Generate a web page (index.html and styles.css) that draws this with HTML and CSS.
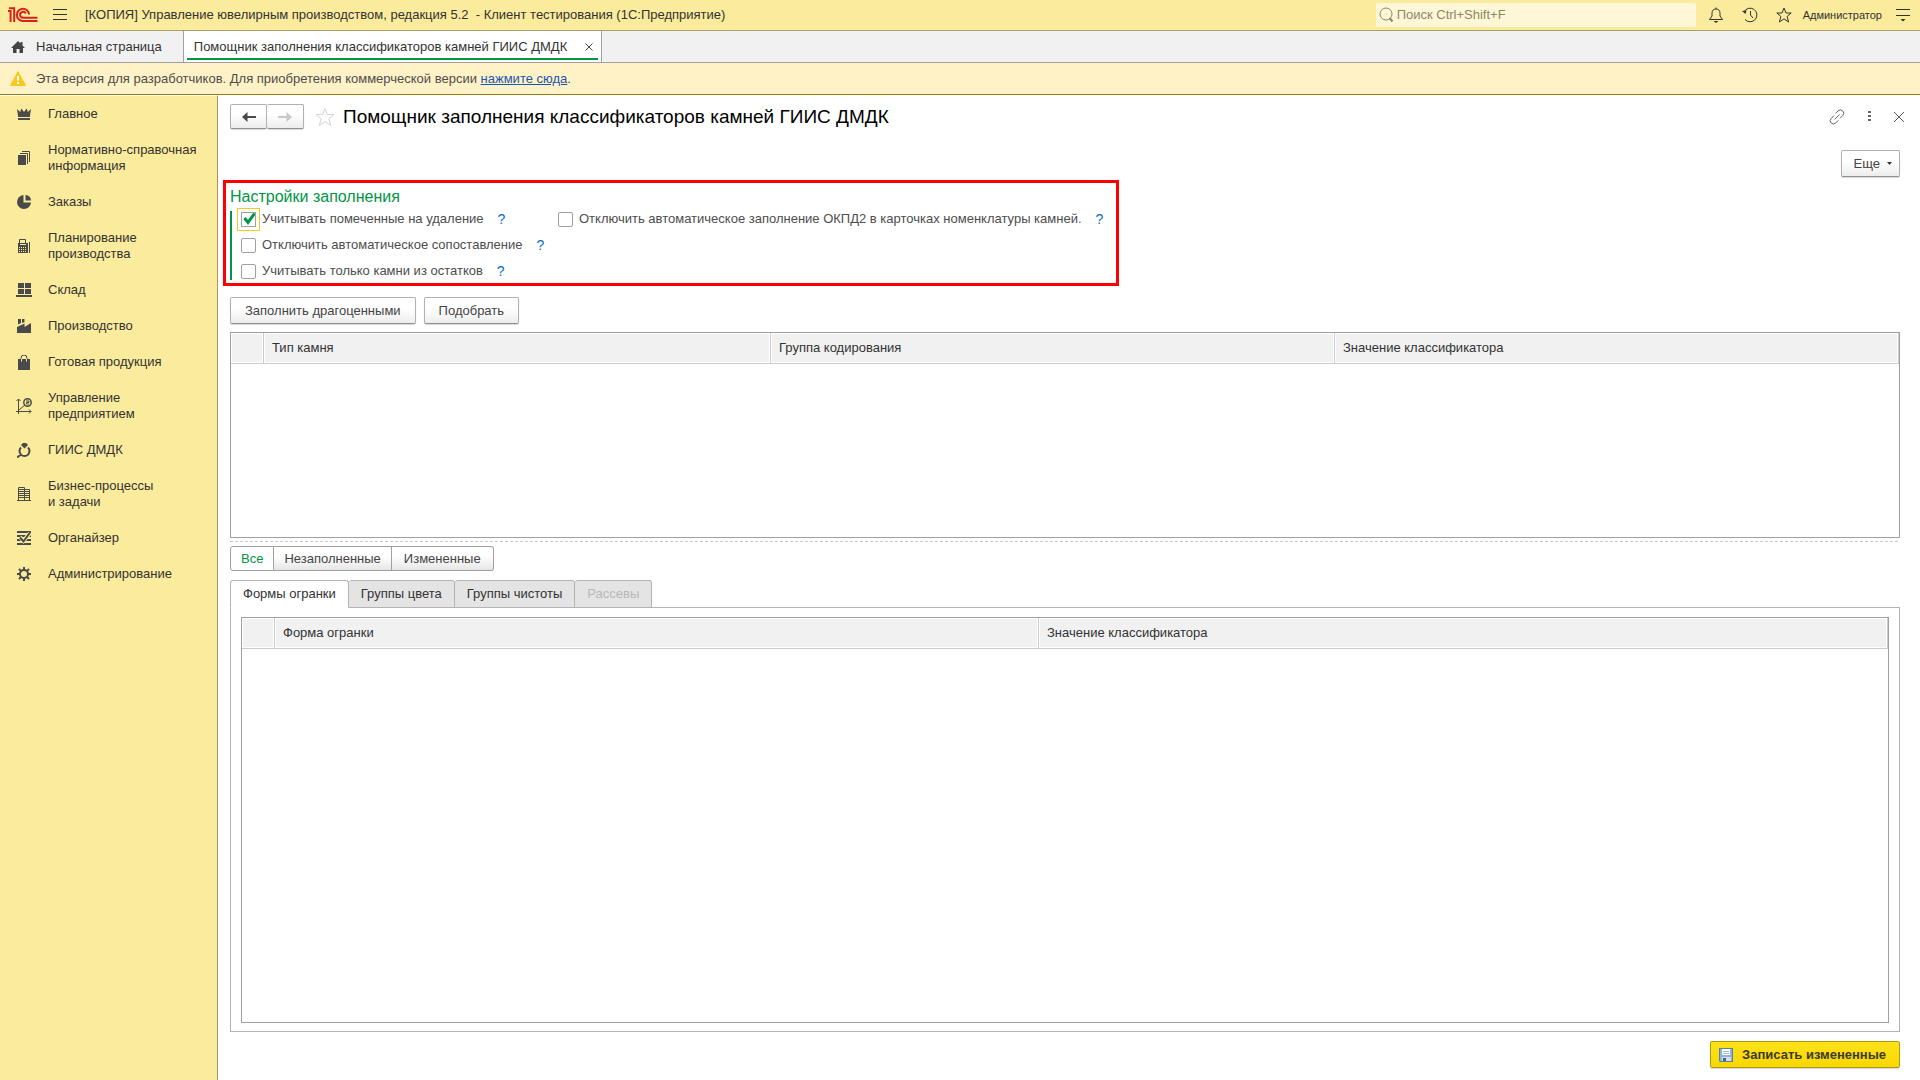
FILE: index.html
```html
<!DOCTYPE html>
<html lang="ru">
<head>
<meta charset="utf-8">
<meta name="viewport" content="width=device-width, initial-scale=1">
<title>Помощник заполнения классификаторов камней ГИИС ДМДК</title>
<link rel="stylesheet" href="styles.css">
</head>
<body>
<div class="app">
  <header class="titlebar">
    <svg class="logo" width="30" height="16" viewBox="0 0 30 16" fill="none" stroke="#d8201c" stroke-width="2" aria-label="1С" role="img">
      <path d="M0 4h2.6V15M1 1.2h5.2V15"/>
      <path d="M21 7.500A6.100 6.100 0 1 0 15 14h14.500"/>
      <path d="M17.800 6.500A3 3 0 1 0 15 10.800h14.500"/>
    </svg>
    <button class="icon-btn menu-btn" aria-label="Меню">
      <svg width="14" height="12" viewBox="0 0 14 12" stroke="#333" stroke-width="1"><path d="M0 .5h14M0 5.500h14M0 10.500h14"/></svg>
    </button>
    <span class="app-title">[КОПИЯ] Управление ювелирным производством, редакция 5.2&nbsp; - Клиент тестирования (1С:Предприятие)</span>
    <label class="search">
      <svg width="15" height="16" viewBox="0 0 15 16" fill="none" stroke="#8d8766"><circle cx="7" cy="7" r="6"/><path d="M10.500 11l3 3.500" stroke-width="2"/></svg>
      <input type="text" placeholder="Поиск Ctrl+Shift+F" aria-label="Поиск">
    </label>
    <div class="tools">
      <button class="icon-btn" aria-label="Уведомления">
        <svg width="16" height="16" viewBox="0 0 16 16" fill="none" stroke="#333"><path d="M8 .5v1.500M1.500 12.500h13L12 9V6.200C12 3.500 10.500 2 8 2S4 3.500 4 6.200V9z"/><path d="M5.500 14h5l-2.500 2z" fill="#333" stroke="none"/></svg>
      </button>
      <button class="icon-btn" aria-label="История">
        <svg width="16" height="16" viewBox="0 0 16 16" fill="none" stroke="#333"><path d="M2 5A6.800 6.800 0 1 1 3 12.500M8.500 4v4l2.500 3"/><path d="M0 4l4.500-.5L3.500 7z" fill="#333" stroke="none"/></svg>
      </button>
      <button class="icon-btn" aria-label="Избранное">
        <svg width="16" height="16" viewBox="0 0 16 16" fill="none" stroke="#333"><path d="M8 1l2 5h5.200l-4.100 3.500 1.500 5.500L8 11.800 3.400 15l1.500-5.500L.8 6H6z"/></svg>
      </button>
      <button class="user">Администратор</button>
      <button class="icon-btn" aria-label="Настройка">
        <svg width="14" height="14" viewBox="0 0 14 14" stroke="#333"><path d="M0 1.500h14M0 7.500h14"/><path d="M4.500 11h5L7 13.500z" fill="#333" stroke="none"/></svg>
      </button>
    </div>
  </header>

  <nav class="window-tabs">
    <a class="window-tab" href="#home">
      <svg width="14" height="14" viewBox="0 0 14 14" fill="#444"><path d="M7 1L0 8h2v5h3.500V9h3v4H12V8h2L11.500 5.500V2h-2v1.500z"/></svg>
      <span>Начальная страница</span>
    </a>
    <a class="window-tab window-tab-active" href="#helper">
      <span>Помощник заполнения классификаторов камней ГИИС ДМДК</span>
      <svg width="8" height="8" viewBox="0 0 8 8" stroke="#444"><path d="M.5.5l7 7M7.500.5l-7 7"/></svg>
    </a>
  </nav>

  <div class="notice">
    <svg width="16" height="15" viewBox="0 0 16 15"><path d="M8 0.500L15.500 14.500H.5z" fill="#fbc91c" stroke="#fbc91c" stroke-linejoin="round"/><path d="M8 5v4.500M8 11v2" stroke="#fff" stroke-width="2"/></svg>
    <p>Эта версия для разработчиков. Для приобретения коммерческой версии <a href="#buy">нажмите сюда</a>.</p>
  </div>

  <div class="body">
    <nav class="sidebar">
      <a href="#main"><svg width="14" height="14" viewBox="0 0 14 14" fill="#4a4a4a"><path d="M0 2l3.200 3L4.300 1.500 7 5l2.700-3.500L10.800 5 14 2l-1.200 8H1.200zM1 11h12v2H1z"/></svg><span>Главное</span></a>
      <a href="#nsi"><svg width="14" height="14" viewBox="0 0 14 14" fill="#4a4a4a"><path d="M1 4h8v10H1z"/><path d="M3 2.500h7.500V13M5 .5h7.500V11" fill="none" stroke="#4a4a4a"/></svg><span>Нормативно-справочная<br>информация</span></a>
      <a href="#orders"><svg width="14" height="14" viewBox="0 0 14 14" fill="#4a4a4a"><path d="M6.500 0v7.500H14A7 7 0 1 1 6.500 0z"/><path d="M8.500 0A6 6 0 0 1 14 5.500H8.500z"/></svg><span>Заказы</span></a>
      <a href="#plan"><svg width="14" height="14" viewBox="0 0 14 14" fill="none" stroke="#4a4a4a"><path d="M2.500 5V.5h6V5M12.500 3v11"/><path d="M1 4h10v10H1z" fill="#4a4a4a" stroke="none"/><path d="M3 5.500h6" stroke="#fbeb9c"/><path d="M2 8.500h8M2 10.500h8M2 12.500h8" stroke="#fbeb9c" stroke-dasharray="1 1"/></svg><span>Планирование<br>производства</span></a>
      <a href="#stock"><svg width="16" height="14" viewBox="0 0 16 14" fill="#4a4a4a"><path d="M2 0h6v5H2zM9 0h6v5H9zM2 6h6v5H2zM9 6h6v5H9zM0 12h16v2H0z"/></svg><span>Склад</span></a>
      <a href="#production"><svg width="14" height="14" viewBox="0 0 14 14" fill="#4a4a4a"><path d="M1 0h3v4L1 5.500zM5 0h2.500v3L5 4zM0 8l7.500-3.500V8L14 4v10H0z"/></svg><span>Производство</span></a>
      <a href="#goods"><svg width="14" height="15" viewBox="0 0 14 15" fill="#4a4a4a"><path d="M1 4h12v11H1z"/><path d="M4 4V3a3 3 0 0 1 6 0v1" fill="none" stroke="#4a4a4a"/><path d="M4.500 4v2.500M9.500 4v2.500" stroke="#fbeb9c"/></svg><span>Готовая продукция</span></a>
      <a href="#management"><svg width="16" height="16" viewBox="0 0 16 16" fill="none" stroke="#4a4a4a"><path d="M2.500 1v15M0 13.500h15M3 12l6-5M.5 3l2-2 2 2M13 11.500l2 2-2 2"/><circle cx="11.500" cy="4.500" r="3.700" stroke-width="1.500"/><path d="M10 3h3v1.500h-2.500V6H13"/></svg><span>Управление<br>предприятием</span></a>
      <a href="#giis"><svg width="14" height="15" viewBox="0 0 14 15" fill="none" stroke="#4a4a4a" stroke-width="2"><path d="M4 4.500A5 5 0 1 0 11 4.500M4 11.500l-4 3"/><path d="M6 0h3l2 2-3.500 3.500L4 2z" fill="#4a4a4a" stroke="none"/></svg><span>ГИИС ДМДК</span></a>
      <a href="#tasks"><svg width="14" height="14" viewBox="0 0 14 14" fill="none" stroke="#4a4a4a"><path d="M1.500 14V.5h6V14M7.500 2.500h5V14M0 13.500h14M2 2.500h5M2 4.500h5M2 6.500h5M2 8.500h5M2 10.500h5M8 4.500h4M8 6.500h4M8 8.500h4M8 10.500h4"/></svg><span>Бизнес-процессы<br>и задачи</span></a>
      <a href="#organizer"><svg width="14" height="14" viewBox="0 0 14 14" fill="none" stroke="#4a4a4a" stroke-width="2"><path d="M0 1h14M0 5h14M0 9h14M0 13h14"/><path d="M3 6l3.500 4L13 2" stroke="#fbeb9c" stroke-width="4"/><path d="M3 6.500L6.500 10.500 13 1.500"/></svg><span>Органайзер</span></a>
      <a href="#admin"><svg width="14" height="14" viewBox="0 0 14 14" fill="none" stroke="#4a4a4a"><circle cx="7" cy="7" r="4" stroke-width="2"/><path d="M7 0v3M7 11v3M0 7h3M11 7h3M2 2l2 2M10 10l2 2M2 12l2-2M10 4l2-2" stroke-width="2"/></svg><span>Администрирование</span></a>
    </nav>

    <main class="form">
      <div class="form-head">
        <div class="history">
          <button class="btn" aria-label="Назад"><svg width="14" height="10" viewBox="0 0 14 10" fill="#4a4a4a"><path d="M0 5l5.500-5v4H14v2H5.500v4z"/></svg></button>
          <button class="btn" aria-label="Вперед" disabled><svg width="14" height="10" viewBox="0 0 14 10" fill="#c8c8c8"><path d="M14 5L8.500 0v4H0v2h8.500v4z"/></svg></button>
        </div>
        <button class="icon-btn" aria-label="В избранное"><svg width="20" height="20" viewBox="0 0 20 20" fill="none" stroke="#d4d4d4"><path d="M10 1.500l2.300 6H19l-5.200 4.300 2 6.700-5.800-4-5.800 4 2-6.700L1 7.500h6.700z"/></svg></button>
        <h1>Помощник заполнения классификаторов камней ГИИС ДМДК</h1>
        <div class="form-tools">
          <button class="icon-btn" aria-label="Ссылка"><svg width="16" height="16" viewBox="0 0 16 16" fill="none" stroke="#666"><path d="M6.500 4.500L9 2a3.100 3.100 0 0 1 4.800 4.500L11 9.300M5 6.500L2.200 9.500A3.100 3.100 0 0 0 6.500 14L9.500 11.500M5.500 10.500l5-5"/></svg></button>
          <button class="icon-btn" aria-label="Еще действия"><svg width="3" height="11" viewBox="0 0 3 11" fill="#666"><path d="M0 0h3v2H0zM0 4h3v2H0zM0 8h3v2H0z"/></svg></button>
          <button class="icon-btn" aria-label="Закрыть"><svg width="10" height="10" viewBox="0 0 10 10" stroke="#555"><path d="M0 0l10 10M10 0L0 10"/></svg></button>
        </div>
      </div>

      <div class="more-row">
        <button class="btn more">Еще <svg width="5" height="3" viewBox="0 0 5 3" fill="#333"><path d="M0 0h5L2.500 3z"/></svg></button>
      </div>

      <section class="settings">
        <h2>Настройки заполнения</h2>
        <div class="options">
          <div class="option"><label><input type="checkbox" class="focused" checked>Учитывать помеченные на удаление</label><a href="#help">?</a></div>
          <div class="option"><label><input type="checkbox">Отключить автоматическое заполнение ОКПД2 в карточках номенклатуры камней.</label><a href="#help">?</a></div>
          <div class="option"><label><input type="checkbox">Отключить автоматическое сопоставление</label><a href="#help">?</a></div>
          <div class="option option-first"><label><input type="checkbox">Учитывать только камни из остатков</label><a href="#help">?</a></div>
        </div>
      </section>

      <div class="commands">
        <button class="btn">Заполнить драгоценными</button>
        <button class="btn">Подобрать</button>
      </div>

      <div class="grid stones">
        <table>
          <colgroup><col class="col-mark"><col class="col-type"><col class="col-group"><col></colgroup>
          <thead><tr><th></th><th>Тип камня</th><th>Группа кодирования</th><th>Значение классификатора</th></tr></thead>
        </table>
      </div>

      <div class="splitter"></div>

      <div class="filter">
        <button class="chosen">Все</button>
        <button>Незаполненные</button>
        <button>Измененные</button>
      </div>

      <div class="pages" role="tablist">
        <button role="tab" aria-selected="true">Формы огранки</button>
        <button role="tab">Группы цвета</button>
        <button role="tab">Группы чистоты</button>
        <button role="tab" disabled>Рассевы</button>
      </div>
      <div class="page">
        <div class="grid shapes">
          <table>
            <colgroup><col class="col-mark"><col class="col-shape"><col></colgroup>
            <thead><tr><th></th><th>Форма огранки</th><th>Значение классификатора</th></tr></thead>
          </table>
        </div>
      </div>

      <div class="footer">
        <button class="btn save">
          <svg width="14" height="14" viewBox="0 0 14 14"><path d="M0 0h14v14H1l-1-1z" fill="#5a7fa8"/><path d="M1 1h12v12H1z" fill="#8db4e0"/><path d="M3 1h8v6H3z" fill="#fff"/><path d="M4 3h6v1H4zM4 5h6v1H4z" fill="#a9bfd6"/><path d="M3 9h9v4H3z" fill="#d9dde0"/><path d="M4 10h3v3H4z" fill="#42658c"/></svg>
          Записать измененные
        </button>
      </div>
    </main>
  </div>
</div>
</body>
</html>
```

FILE: styles.css
```css
* { box-sizing: border-box; }

body {
  margin: 0;
  font: 13px/16px "Liberation Sans", Arial, sans-serif;
  color: #333;
  background: #fff;
}

button, input { font: inherit; color: inherit; }
button { padding: 0; border: 0; background: none; }
h1, h2, p { margin: 0; font-weight: normal; }
a { color: inherit; text-decoration: none; }
svg { display: block; flex: none; }

.app { display: flex; flex-direction: column; min-height: 100vh; }

/* Title bar */
.titlebar {
  display: flex;
  align-items: center;
  height: 31px;
  padding: 0 10px 0 8px;
  background: #fbeb9c;
  border-bottom: 1px solid #a9a06a;
}
.icon-btn { display: flex; align-items: center; justify-content: center; }
.menu-btn { margin: 0 18px 0 15px; }
.app-title { flex: 1; white-space: nowrap; }
.search {
  display: flex;
  align-items: center;
  gap: 3px;
  width: 320px;
  height: 24px;
  padding-left: 3px;
  background: #fdf7d7;
  border-radius: 2px;
}
.search input {
  flex: 1;
  min-width: 0;
  padding: 0;
  border: 0;
  outline: 0;
  background: none;
}
.search input::placeholder { color: #8d8766; opacity: 1; }
.tools { display: flex; align-items: center; gap: 18px; margin-left: 12px; }
.user { font-size: 11px; margin: 0 -4px 0 -7px; }

/* Open windows */
.window-tabs {
  display: flex;
  height: 32px;
  background: #f1f1f1;
  border-bottom: 1px solid #a0a0a0;
}
.window-tab {
  display: flex;
  align-items: center;
  gap: 11px;
  padding: 0 21px 0 11px;
  border-right: 1px solid #a0a0a0;
}
.window-tab-active {
  gap: 18px;
  padding: 0 8px 0 10px;
  background: linear-gradient(#009646, #009646) 3px 27px / calc(100% - 6px) 2px no-repeat #fff;
}

.notice {
  display: flex;
  align-items: center;
  gap: 10px;
  height: 32px;
  padding-left: 10px;
  color: #4d4d4d;
  background: #fff2c6;
  border-bottom: 1px solid #9a7b10;
}
.notice a { color: #1a56b0; text-decoration: underline; }

.body { display: flex; flex: 1; }

/* Sections */
.sidebar {
  width: 218px;
  flex: none;
  background: #fbeb9c;
  border-top: 1px solid #fff;
  border-right: 1px solid #a09563;
}
.sidebar a {
  display: grid;
  grid-template-columns: 16px 1fr;
  align-items: center;
  justify-items: center;
  gap: 16px;
  padding: 10px 0 10px 16px;
}
.sidebar span { justify-self: start; }

/* Form */
.form {
  display: flex;
  flex-direction: column;
  flex: 1;
  min-width: 0;
  padding: 9px 20px 12px 12px;
}
.form-head { display: flex; align-items: center; height: 25px; }
.form-head h1 { margin-left: 8px; font-size: 19px; line-height: 24px; color: #000; }
.history { display: flex; margin-right: 11px; }
.form-tools { display: flex; align-items: center; gap: 23px; margin: 0 -4px 0 auto; }

.btn {
  display: flex;
  align-items: center;
  justify-content: center;
  height: 27px;
  padding: 0 14px;
  color: #444;
  background: linear-gradient(#fff 40%, #ededed);
  border: 1px solid #b0b0b0;
  border-bottom-color: #909090;
  border-radius: 2px;
  box-shadow: 0 1px 1px #d8d8d8;
}
.history .btn { width: 37px; height: 25px; padding: 0; }
.history .btn + .btn { border-left: 0; }

.more-row { display: flex; justify-content: flex-end; margin-top: 21px; }
.more { gap: 7px; padding: 0 7px 0 12px; }

.settings {
  align-self: flex-start;
  width: 896px;
  height: 106px;
  margin: 3px 0 0 -7px;
  padding: 5px 4px;
  border: 3px solid #f00;
}
.settings h2 { font-size: 16px; line-height: 18px; color: #009646; }
.options {
  display: grid;
  grid-template-columns: 317px 1fr;
  grid-auto-rows: 16px;
  row-gap: 10px;
  height: 69px;
  margin-top: 5px;
  padding-left: 9px;
  border-left: 2px solid #009646;
}
.option { display: flex; align-items: center; gap: 14px; color: #4d4d4d; }
.option-first { grid-column: 1; }
.option label { display: flex; align-items: center; gap: 6px; white-space: nowrap; }
.option a { color: #0a6ebd; font-size: 14px; }
.option input {
  appearance: none;
  width: 15px;
  height: 15px;
  margin: 0;
  background: #fff;
  border: 1px solid #a0a0a0;
  border-radius: 2px;
}
.option input:checked {
  background: #fff url("data:image/svg+xml,%3Csvg xmlns='http://www.w3.org/2000/svg' viewBox='0 0 13 13'%3E%3Cpath d='M2.500 5L6 9.500 12.500 0.500' fill='none' stroke='%23009646' stroke-width='3'/%3E%3C/svg%3E") center / 13px no-repeat;
}
.option .focused { border-radius: 0; outline: 1px solid #fbc91c; outline-offset: 3px; }

.commands { display: flex; gap: 8px; margin-top: 11px; }

/* Data grids */
.grid { border: 1px solid #a0a0a0; }
.stones { height: 206px; margin-top: 8px; }
.grid table { width: 100%; border-collapse: separate; border-spacing: 0; table-layout: fixed; }
.grid th {
  height: 31px;
  padding: 0 8px;
  font-weight: normal;
  text-align: left;
  background: #f1f1f1;
  border: 1px solid #ccc;
  border-width: 0 1px 1px 0;
  box-shadow: inset 0 0 0 1px #fff;
}
.col-mark { width: 33px; }
.col-type { width: 507px; }
.col-group { width: 564px; }
.col-shape { width: 764px; }

.splitter {
  height: 1px;
  margin: 3px 0 4px;
  background: repeating-linear-gradient(90deg, #ccc 0 3px, transparent 3px 5px);
}

.filter { display: flex; }
.filter button {
  height: 25px;
  padding: 0 10px;
  color: #444;
  background: linear-gradient(#fff 40%, #e6e6e6);
  border: 1px solid #a0a0a0;
  border-left-width: 0;
}
.filter button:first-child { border-left-width: 1px; border-radius: 3px 0 0 3px; }
.filter button:last-child { padding: 0 12px; border-radius: 0 3px 3px 0; }
.filter .chosen { color: #009646; background: #fff; }

.pages { display: flex; margin-top: 9px; }
.pages button {
  height: 28px;
  padding: 0 12px;
  background: #e4e4e4;
  border: 1px solid #b3b3b3;
  border-left-width: 0;
  border-radius: 3px 3px 0 0;
}
.pages [aria-selected] {
  position: relative;
  z-index: 1;
  background: #fff;
  border-left-width: 1px;
  border-bottom-color: #fff;
}
.pages button:disabled { color: #b8b8b8; }
.page {
  display: flex;
  flex: 1;
  min-height: 200px;
  margin-top: -1px;
  padding: 9px 10px 8px;
  border: 1px solid #b3b3b3;
}
.shapes { flex: 1; }

.footer { display: flex; justify-content: flex-end; margin-top: 9px; }
.save {
  gap: 9px;
  padding: 0 13px 0 8px;
  font-weight: bold;
  color: #3d3a2a;
  background: linear-gradient(#ffe21a, #f8d800);
  border-color: #b09a10;
}
```
